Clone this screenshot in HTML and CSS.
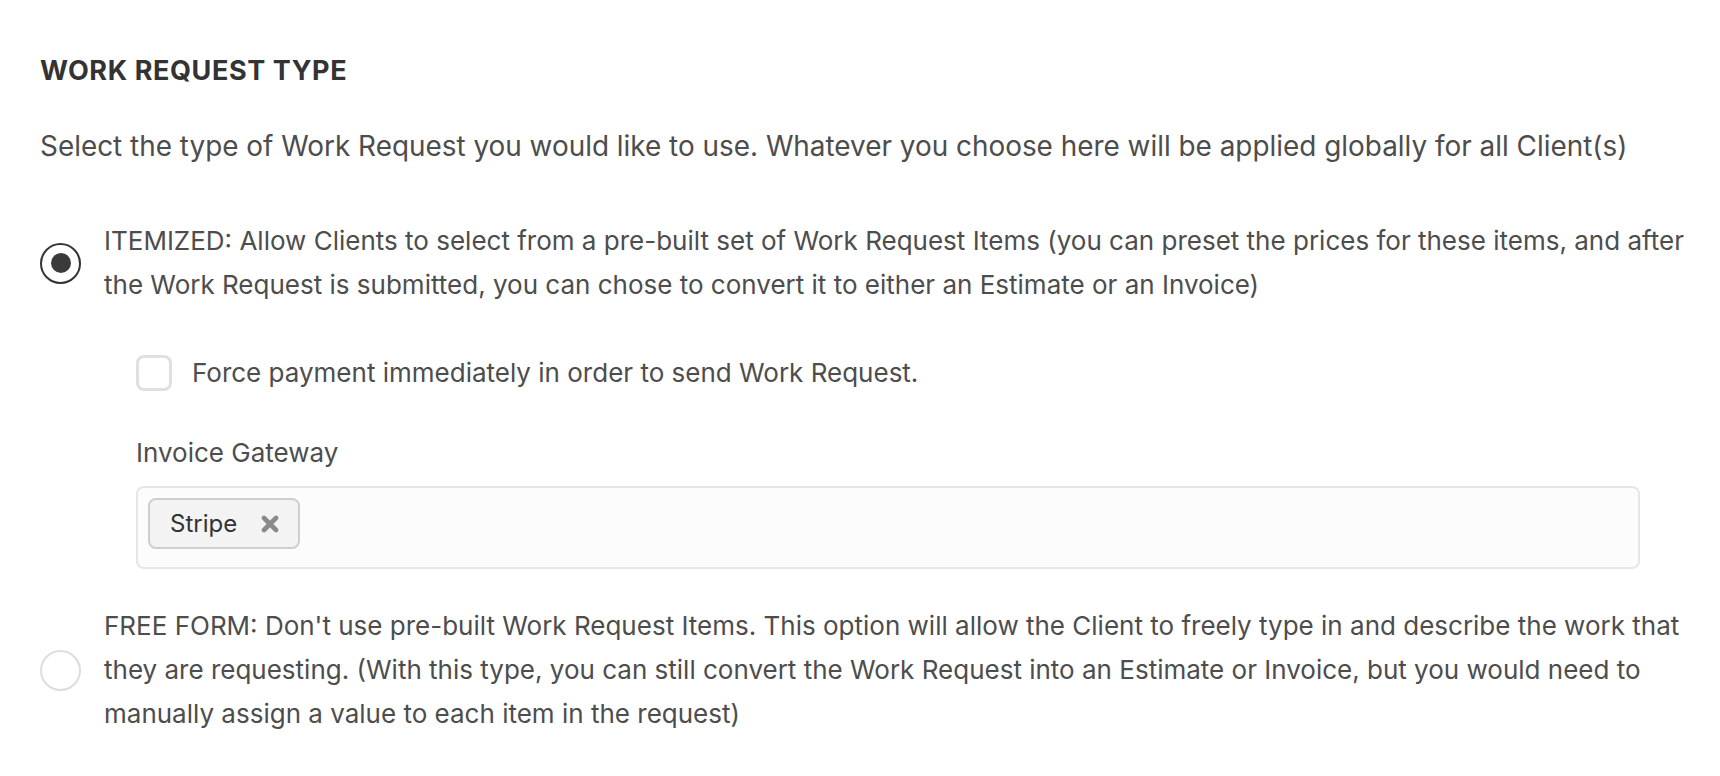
FILE: index.html
```html
<!DOCTYPE html>
<html>
<head>
<meta charset="utf-8">
<link rel="stylesheet" href="styles.css">
</head>
<body>
<div class="page">
  <h2 class="title">WORK REQUEST TYPE</h2>
  <p class="desc">Select the type of Work Request you would like to use. Whatever you choose here will be applied globally for all Client(s)</p>

  <div class="option">
    <span class="radio checked"><span class="dot"></span></span>
    <div class="option-text">ITEMIZED: Allow Clients to select from a pre-built set of Work Request Items (you can preset the prices for these items, and after the Work Request is submitted, you can chose to convert it to either an Estimate or an Invoice)</div>
  </div>

  <div class="sub">
    <label class="check-row">
      <span class="checkbox"></span>
      <span>Force payment immediately in order to send Work Request.</span>
    </label>
    <div class="field-label">Invoice Gateway</div>
    <div class="multi">
      <span class="tag">Stripe<svg class="tag-x" width="18" height="18" viewBox="0 0 18 18"><path d="M3 3 L15 15 M15 3 L3 15" stroke="#8a8a8a" stroke-width="4.6" stroke-linecap="round"/></svg></span>
    </div>
  </div>

  <div class="option option2">
    <span class="radio"></span>
    <div class="option-text">FREE FORM: Don't use pre-built Work Request Items. This option will allow the Client to freely type in and describe the work that they are requesting. (With this type, you can still convert the Work Request into an Estimate or Invoice, but you would need to manually assign a value to each item in the request)</div>
  </div>
</div>
</body>
</html>
```

FILE: styles.css
```css
html, body {
  margin: 0;
  padding: 0;
  background: #ffffff;
}
body {
  font-family: Inter, "Noto Sans", sans-serif;
  color: #4d4d4d;
}
.page {
  padding: 52px 20px 0 40px;
}
.title {
  margin: 0;
  font-size: 27px;
  letter-spacing: 0.6px;
  line-height: 38px;
  font-weight: 700;
  color: #333333;
}
.desc {
  margin: 34px 0 0 0;
  font-size: 27.9px;
  line-height: 44px;
}
.option {
  display: flex;
  align-items: center;
  margin-top: 51px;
  font-size: 26px;
  line-height: 44px;
}
.option2 {
  margin-top: 35px;
}
.radio {
  flex: none;
  width: 41px;
  height: 41px;
  box-sizing: border-box;
  border: 2px solid #dddddd;
  border-radius: 50%;
  margin-right: 23px;
  display: flex;
  align-items: center;
  justify-content: center;
}
.radio.checked {
  border-color: #333333;
}
.dot {
  width: 20px;
  height: 20px;
  border-radius: 50%;
  background: #3a3a3a;
}
.option-text {
  flex: 1;
}
.sub {
  padding-left: 96px;
  margin-top: 44px;
  font-size: 26px;
  line-height: 44px;
}
.check-row {
  display: flex;
  align-items: center;
  gap: 20px;
}
.checkbox {
  width: 36px;
  height: 36px;
  box-sizing: border-box;
  border: 3px solid #e0e0e0;
  border-radius: 8px;
  flex: none;
}
.field-label {
  margin-top: 36px;
}
.multi {
  margin-top: 11px;
  width: 1504px;
  box-sizing: border-box;
  border: 2px solid #e3e6eb;
  border-radius: 8px;
  background: #fcfcfc;
  padding: 10px 10px 18px 10px;
  display: flex;
}
.tag {
  display: inline-flex;
  align-items: center;
  height: 51px;
  box-sizing: border-box;
  border: 2px solid #cfcfcf;
  border-radius: 8px;
  background: #f3f3f3;
  padding: 0 19px 0 20px;
  font-size: 24px;
  color: #333333;
}
.tag-x {
  margin-left: 24px;
  flex: none;
}
```
